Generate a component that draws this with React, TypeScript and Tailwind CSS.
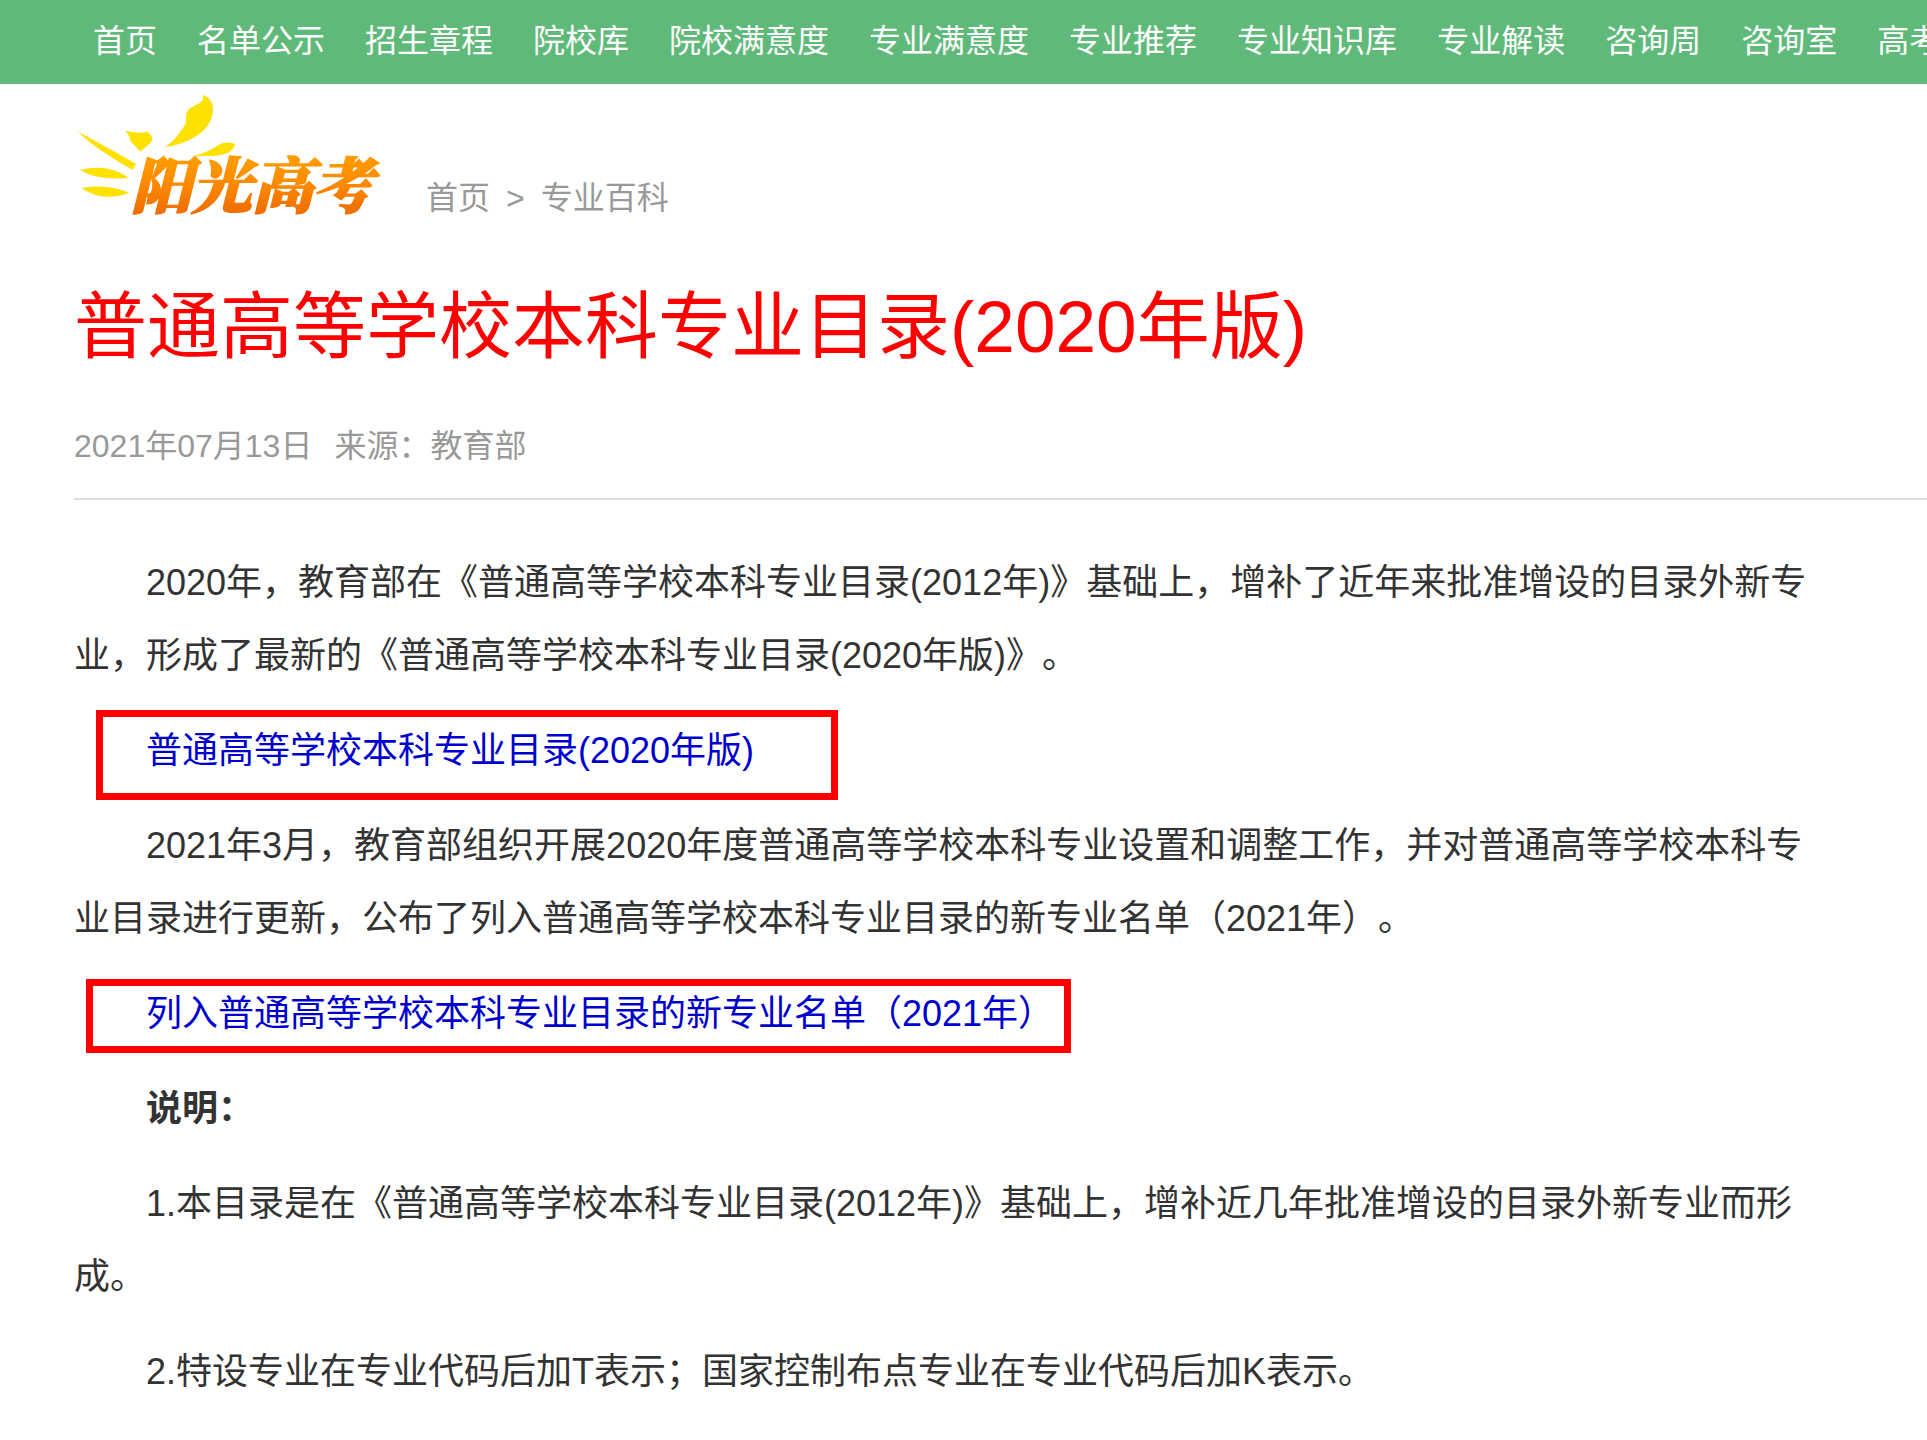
import React from "react";

const navItems = [
  "首页",
  "名单公示",
  "招生章程",
  "院校库",
  "院校满意度",
  "专业满意度",
  "专业推荐",
  "专业知识库",
  "专业解读",
  "咨询周",
  "咨询室",
  "高考",
];

const Logo = () => (
  <svg
    viewBox="42 36 924 378"
    className="w-[308px] h-[126px] shrink-0 overflow-visible"
    role="img"
    aria-label="阳光高考"
  >
    <defs>
      <linearGradient id="logo-text" gradientUnits="userSpaceOnUse" x1="0" y1="232" x2="0" y2="404">
        <stop offset="0" stopColor="#ff9c00" />
        <stop offset="0.4" stopColor="#ff8c00" />
        <stop offset="1" stopColor="#ee6c00" />
      </linearGradient>
    </defs>
    <g fill="#ffe100">
      <path d="M430 45 C450 53 461 70 459 92 C457 118 444 143 418 162 C391 182 357 195 316 201 C342 182 362 158 378 129 C379 113 376 101 384 91 C393 79 418 74 428 61 Z" />
      <path d="M194 150 C213 158 236 161 261 155 C270 161 278 169 277 180 C271 192 254 203 241 215 C228 201 219 193 212 184 C210 171 204 162 194 150 Z" />
      <path d="M54 155 L90 174 L228 251 L217 270 C165 238 104 204 54 155 Z" />
      <path d="M60 270 C115 257 163 263 207 295 C157 296 106 297 60 270 Z" />
      <path d="M65 324 C118 315 164 319 208 338 C164 356 111 357 65 324 Z" />
      <path d="M399 227 C435 222 457 205 485 190 C498 186 513 187 525 192 C522 207 512 215 497 221 C468 230 433 229 399 227 Z" />
    </g>
    <text
      x="212"
      y="385"
      fill="url(#logo-text)"
      stroke="url(#logo-text)"
      strokeWidth="5"
      className="text-[182px] font-black italic font-['Noto_Serif_CJK_SC','Noto_Sans_CJK_SC',sans-serif]"
    >
      阳光高考
    </text>
  </svg>
);

const App = () => {
  return (
    <div
      lang="zh-CN"
      className="min-h-screen overflow-hidden bg-white text-[#333] font-['Liberation_Sans','Noto_Sans_CJK_SC',sans-serif] [text-spacing-trim:space-all]"
    >
      <nav className="flex h-[84px] items-center gap-10 overflow-hidden bg-[#5fba7a] pb-0.5 pl-[93px] text-[32px] leading-10 whitespace-nowrap text-white">
        {navItems.map((item) => (
          <a key={item} href="#" className="shrink-0">
            {item}
          </a>
        ))}
      </nav>

      <div className="pl-[74px]">
        <header className="flex items-end pt-2">
          <Logo />
          <div className="ml-11 flex gap-4 text-[32px] leading-10 text-[#999]">
            <a href="#">首页</a>
            <span>&gt;</span>
            <a href="#">专业百科</a>
          </div>
        </header>

        <h1 className="mt-16 text-[73px] leading-[90px] text-[#f00]">
          普通高等学校本科专业目录(2020年版)
        </h1>
        <div className="flex gap-[22px] border-b-2 border-[#ddd] pt-[54px] pb-8 text-[32px] leading-10 text-[#999]">
          <span>2021年07月13日</span>
          <span>来源：教育部</span>
        </div>

        <article className="mt-[46px] flex flex-col gap-[22px] pr-[104px] indent-[72px] text-[36px] leading-[73px]">
          <p>
            2020年，教育部在《普通高等学校本科专业目录(2012年)》基础上，增补了近年来批准增设的目录外新专业，形成了最新的《普通高等学校本科专业目录(2020年版)》。
          </p>
          <p className="relative">
            <a href="#" className="text-[#00c]">
              普通高等学校本科专业目录(2020年版)
            </a>
            <span className="pointer-events-none absolute -top-1 left-[22px] h-[90px] w-[742px] border-7 border-[#f00]" />
          </p>
          <p>
            2021年3月，教育部组织开展2020年度普通高等学校本科专业设置和调整工作，并对普通高等学校本科专业目录进行更新，公布了列入普通高等学校本科专业目录的新专业名单（2021年）。
          </p>
          <p className="relative">
            <a href="#" className="text-[#00c]">
              列入普通高等学校本科专业目录的新专业名单（2021年）
            </a>
            <span className="pointer-events-none absolute top-0.5 left-3 h-[74px] w-[985px] border-7 border-[#f00]" />
          </p>
          <p>
            <strong>说明：</strong>
          </p>
          <p>
            1.本目录是在《普通高等学校本科专业目录(2012年)》基础上，增补近几年批准增设的目录外新专业而形成。
          </p>
          <p>2.特设专业在专业代码后加T表示；国家控制布点专业在专业代码后加K表示。</p>
        </article>
      </div>
    </div>
  );
};

export default App;
